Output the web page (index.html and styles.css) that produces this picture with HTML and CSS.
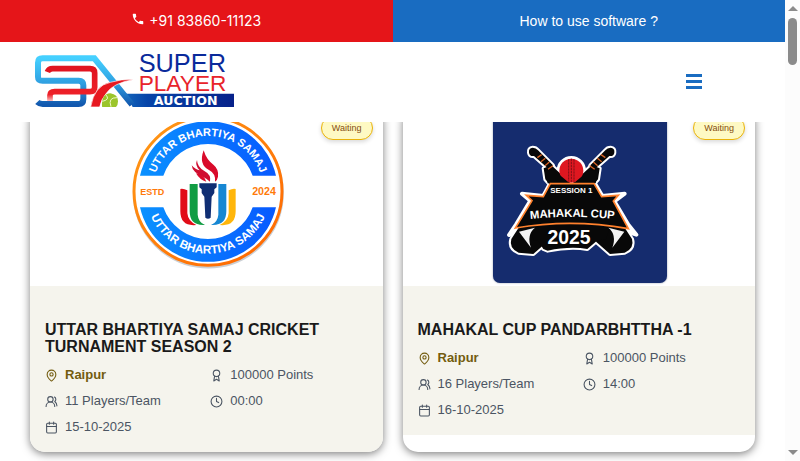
FILE: index.html
```html
<!DOCTYPE html>
<html lang="en">
<head>
<meta charset="utf-8">
<title>Super Player Auction</title>
<link rel="stylesheet" href="styles.css">
</head>
<body>
<svg class="sprite" aria-hidden="true">
  <symbol id="pin" viewBox="0 0 24 24"><path d="M20 10c0 5-5.500 10.200-7.400 11.800a1 1 0 0 1-1.200 0C9.500 20.200 4 15 4 10a8 8 0 0 1 16 0"/><circle cx="12" cy="10" r="3"/></symbol>
  <symbol id="award" viewBox="0 0 24 24"><circle cx="12" cy="8" r="6"/><path d="M8.500 13 7 22l5-3 5 3-1.500-9"/></symbol>
  <symbol id="users" viewBox="0 0 24 24"><path d="M18 21a8 8 0 0 0-16 0"/><circle cx="10" cy="8" r="5"/><path d="M22 20c0-3.370-2-6.500-4-8a5 5 0 0 0-.450-8.300"/></symbol>
  <symbol id="clock" viewBox="0 0 24 24"><circle cx="12" cy="12" r="10"/><path d="M12 6v6l4 2"/></symbol>
  <symbol id="calendar" viewBox="0 0 24 24"><path d="M8 2v4M16 2v4M3 10h18"/><rect x="3" y="4" width="18" height="18" rx="2"/></symbol>
</svg>
<div class="page">
  <div class="topbar">
    <a class="phone" href="tel:+918386011123"><svg viewBox="0 0 24 24" aria-hidden="true"><path d="M6.600 10.800c1.400 2.800 3.800 5.100 6.600 6.600l2.200-2.200c.3-.3.700-.4 1-.2 1.100.4 2.300.6 3.600.6.600 0 1 .4 1 1V20c0 .6-.4 1-1 1C10.600 21 3 13.400 3 4c0-.6.400-1 1-1h3.500c.6 0 1 .4 1 1 0 1.200.2 2.400.6 3.600.1.400 0 .7-.3 1z"/></svg>+91 83860-11123</a>
    <a class="howto" href="#">How to use software ?</a>
  </div>
  <header class="header">
    <a href="#" aria-label="Super Player Auction">
      <svg class="logo" viewBox="105 165 597 156">
        <defs>
          <linearGradient id="sky" x1="0" y1="0" x2="0" y2="1"><stop offset="0" stop-color="#45d0ff"/><stop offset=".55" stop-color="#2e9ee0"/><stop offset="1" stop-color="#1258ae"/></linearGradient>
          <linearGradient id="bar" x1="0" y1="0" x2="1" y2="0"><stop offset="0" stop-color="#1263bb"/><stop offset=".2" stop-color="#0644a8"/><stop offset="1" stop-color="#07218a"/></linearGradient>
          <linearGradient id="crimson" x1="0" y1="0" x2="0" y2="1"><stop offset="0" stop-color="#e01420"/><stop offset=".8" stop-color="#ee2028"/><stop offset="1" stop-color="#ffc0c0"/></linearGradient>
        </defs>
        <path d="M378 281H702V321H398Z" fill="url(#bar)"/>
        <path d="M396 314L283 175H128Q114 175 114 188V231Q114 242 128 242H236Q250 242 250 256V297Q250 312 236 312H128Q118 312 112 306" fill="none" stroke="url(#sky)" stroke-width="18"/>
        <path d="M142 216Q146 206 158 206H270Q284 206 284 219V262Q284 275 270 275H164Q150 275 150 286V303" fill="none" stroke="url(#crimson)" stroke-width="17"/>
        <path d="M272 321Q283 256 331 247Q365 236 400 239Q339 249 319 280Q304 297 299 321Z" fill="#e71820" stroke="#fff" stroke-width="2"/>
        <path d="M306 320Q304 281 331 280Q354 283 354 304Q354 315 348 321H308Z" fill="#9bc52b"/>
        <path d="M317 284Q332 299 307 304M351 293Q323 292 333 320" fill="none" stroke="#eff8c8" stroke-width="3"/>
        <text class="brand" x="416" y="217" font-size="76" fill="#0a2a9b">SUPER</text>
        <text class="brand" x="416" y="273" font-size="68" fill="#e8242b">PLAYER</text>
        <text class="brand-wide" x="557" y="315" font-size="38" fill="#fff" text-anchor="middle">AUCTION</text>
      </svg>
    </a>
    <button class="menu" type="button" aria-label="Menu"><span></span><span></span><span></span></button>
  </header>
  <main class="cards">
    <article class="card">
      <div class="cover">
        <svg viewBox="3 -3 522 522" role="img" aria-label="Uttar Bhartiya Samaj">
          <defs>
            <linearGradient id="ring" x1="0" y1="0" x2="1" y2="0"><stop offset="0" stop-color="#0a91ff"/><stop offset="1" stop-color="#0759ff"/></linearGradient>
            <linearGradient id="edge" x1="0" y1="0" x2="1" y2="1"><stop offset="0" stop-color="#ff9a17"/><stop offset="1" stop-color="#ff6500"/></linearGradient>
            <path id="arc-top" d="M98 244A166 166 0 0 1 430 244"/>
            <path id="arc-bottom" d="M77 244A187 187 0 0 0 451 244"/>
          </defs>
          <circle cx="265" cy="249" r="223" fill="none" stroke="#ccd0d5" stroke-width="7"/>
          <circle cx="264" cy="244" r="222" fill="#fff" stroke="url(#edge)" stroke-width="9"/>
          <path d="M60 197A209 209 0 0 1 468 197H398A142 142 0 0 0 130 197Z" fill="url(#ring)"/>
          <path d="M60 292A209 209 0 0 0 468 292H398A142 142 0 0 1 130 292Z" fill="url(#ring)"/>
          <g class="bold" fill="#fff" text-anchor="middle">
            <text font-size="33"><textPath href="#arc-top" startOffset="50%">UTTAR BHARTIYA SAMAJ</textPath></text>
            <text font-size="35"><textPath href="#arc-bottom" startOffset="50%">UTTAR BHARTIYA SAMAJ</textPath></text>
          </g>
          <g class="bold" fill="#ff7a09" text-anchor="middle"><text x="97" y="254" font-size="27">ESTD</text><text x="432" y="256" font-size="32">2024</text></g>
          <path d="M181 237Q190 235 202 241V310Q204 333 229 345Q181 350 181 304Z" fill="#e10c18"/>
          <path d="M209 222H233V314Q235 337 255 345Q209 348 209 304Z" fill="#119c43"/>
          <path d="M319 222H295V314Q293 337 273 345Q319 348 319 304Z" fill="#1687d3"/>
          <path d="M347 237Q338 235 326 241V310Q324 333 299 345Q347 350 347 304Z" fill="#ffb60b"/>
          <path d="M238 220H290V232L283 238V249L275 260L272 323Q264 329 256 323L253 260L245 249V238L238 232Z" fill="#102e73"/>
          <path d="M251 121Q259 149 281 165Q297 178 294 200Q292 211 285 215Q288 191 267 180Q235 164 251 121Z" fill="#d90b2b"/>
          <path d="M231 150Q232 171 252 182Q275 194 270 215Q261 207 250 201Q217 187 215 166Q227 180 239 181Q224 166 231 150Z" fill="#cf0d30"/>
          <path d="M228 190Q251 192 259 215Q240 211 228 190Z" fill="#d90b2b"/>
        </svg>
        <span class="badge">Waiting</span>
      </div>
      <div class="info">
        <h2>UTTAR BHARTIYA SAMAJ CRICKET TURNAMENT SEASON 2</h2>
        <ul>
          <li class="place"><svg><use href="#pin"/></svg>Raipur</li>
          <li><svg><use href="#award"/></svg>100000 Points</li>
          <li><svg><use href="#users"/></svg>11 Players/Team</li>
          <li><svg><use href="#clock"/></svg>00:00</li>
          <li><svg><use href="#calendar"/></svg>15-10-2025</li>
        </ul>
      </div>
    </article>
    <article class="card">
      <div class="cover">
        <svg class="navy" viewBox="39 -18 522 522" role="img" aria-label="Mahakal Cup 2025">
          <defs>
            <path id="cup-arc" d="M132 314Q277 297 422 314"/>
            <g id="bat">
              <path d="M147 113Q145 99 158 98Q168 98 174 106L219 151L207 163L162 123Q149 125 147 113Z"/>
              <path d="M191 160L214 151L300 230L435 340L456 372Q464 400 434 413L390 417L350 382L216 216L196 193Z"/>
            </g>
            <path id="banner" d="M211 204H344L367 243L434 236L403 259L445 329L469 359L400 338Q275 314 159 338L87 360L109 327L151 257L126 236L190 243Z"/>
            <path id="base" d="M150 310H400L378 372L350 378L322 402Q270 393 203 407L190 402L174 377L160 376Z"/>
          </defs>
          <g fill="#fff" stroke="#fff" stroke-width="12" stroke-linejoin="round">
            <use href="#bat"/><use href="#bat" transform="matrix(-1 0 0 1 550 0)"/><use href="#banner"/><use href="#base"/><circle cx="274" cy="167" r="38"/>
          </g>
          <g fill="#080808"><use href="#bat"/><use href="#bat" transform="matrix(-1 0 0 1 550 0)"/><use href="#base"/></g>
          <circle cx="274" cy="167" r="36" fill="#df1720"/>
          <path d="M266 133V200M274 131V202M282 133V200" fill="none" stroke="#7d1016" stroke-width="3" stroke-dasharray="7 2"/>
          <path d="M194 167L222 166L269 205H203Z M356 167L328 166L281 205H347Z" fill="#080808"/>
          <path d="M172 128L185 119M183 140L196 130M195 152L208 141M204 163L219 152M376 128L363 119M365 140L352 130M353 152L340 141M344 163L329 152" stroke="#d76325" stroke-width="4"/>
          <path d="M117 350L165 338Q139 359 153 398L135 374ZM433 350L385 338Q411 359 397 398L415 374Z" fill="#f4f4f4"/>
          <path d="M211 206H342L365 245L415 241L400 258L445 341Q275 310 106 339L156 257L139 241L190 245Z" fill="#080808" stroke="#ff812d" stroke-width="5"/>
          <g class="bold" fill="#fff" text-anchor="middle">
            <text x="274" y="234" font-size="24">SESSION 1</text>
            <text font-size="34"><textPath href="#cup-arc" startOffset="50%">MAHAKAL CUP</textPath></text>
            <text x="267" y="388" font-size="58">2025</text>
          </g>
        </svg>
        <span class="badge">Waiting</span>
      </div>
      <div class="info">
        <h2>MAHAKAL CUP PANDARBHTTHA -1</h2>
        <ul>
          <li class="place"><svg><use href="#pin"/></svg>Raipur</li>
          <li><svg><use href="#award"/></svg>100000 Points</li>
          <li><svg><use href="#users"/></svg>16 Players/Team</li>
          <li><svg><use href="#clock"/></svg>14:00</li>
          <li><svg><use href="#calendar"/></svg>16-10-2025</li>
        </ul>
      </div>
    </article>
  </main>
</div>
<div class="scrollbar" aria-hidden="true">
  <i class="arrow up"></i>
  <i class="thumb"></i>
  <i class="arrow down"></i>
</div>
</body>
</html>
```
FILE: styles.css
```css
* { box-sizing: border-box; }
body {
  margin: 0;
  height: 100vh;
  display: flex;
  overflow: hidden;
  background: #fff;
  font-family: "Liberation Sans", Arial, sans-serif;
}
.sprite { display: none; }
.page { flex: 1; min-width: 0; overflow: hidden; }
a { color: inherit; text-decoration: none; }

.topbar { display: grid; grid-template-columns: 1fr 1fr; color: #fff; font-size: 14px; line-height: 42px; }
.topbar a { display: flex; justify-content: center; }
.phone { background: #e51519; font-family: Inter, sans-serif; gap: 4px; }
.phone svg { width: 14px; height: 14px; margin-top: 12px; fill: currentColor; }
.howto { background: #196cc1; }

.header {
  position: relative;
  z-index: 1;
  display: flex;
  align-items: center;
  justify-content: space-between;
  height: 80px;
  padding: 0 83px 2px 35px;
  background: #fff;
}
.logo { display: block; width: 199px; height: 52px; overflow: visible; }
.brand { font-family: "Liberation Sans", sans-serif; }
.brand-wide { font-family: "DejaVu Sans", sans-serif; font-weight: 700; }
.bold { font-family: "Liberation Sans", sans-serif; font-weight: 700; }
.menu { display: grid; gap: 3px; width: 16px; padding: 0; border: 0; background: none; }
.menu span { height: 3px; background: #196cc1; }

.cards {
  display: grid;
  grid-template-columns: 1fr 1fr;
  gap: 20px;
  margin-top: -16px;
  padding: 0 30px;
}
.card {
  overflow: hidden;
  border-radius: 15px;
  background: #fff;
  box-shadow: 0 2px 8px rgba(0, 0, 0, .5);
}
.cover { position: relative; display: flex; justify-content: center; padding: 3px 3px 3px 6px; }
.cover svg { width: 174px; height: 174px; }
.navy { background: #152c6e; border-radius: 7px; box-shadow: 0 0 2px #8b93a8; }
.badge {
  position: absolute;
  top: 10px;
  right: 10px;
  padding: 0 10px;
  border: 1px solid #eab308;
  border-radius: 12px;
  background: #fef9c3;
  box-shadow: 0 2px 4px rgba(0, 0, 0, .15);
  color: #854d0e;
  font-size: 9px;
  line-height: 22px;
}
.info { padding: 35px 15px 15px; background: #f5f4ed; }
h2 { margin: 0 0 10px; color: #1a1a1a; font-size: 16px; line-height: 17px; }
ul {
  display: grid;
  grid-template-columns: 1fr 1fr;
  gap: 6px 8px;
  margin: 0;
  padding: 0;
  list-style: none;
  color: #4b5563;
  font-size: 13px;
  line-height: 20px;
}
li { display: flex; align-items: center; gap: 7px; }
li svg { width: 13px; height: 13px; fill: none; stroke: currentColor; stroke-width: 2; stroke-linecap: round; stroke-linejoin: round; }
.place { color: #735c0f; font-weight: 700; }

.scrollbar { display: flex; flex-direction: column; align-items: center; width: 15px; padding: 6px 0; background: #fcfcfc; }
.arrow { border: 5px solid transparent; }
.up { border-top: 0; border-bottom-color: #8b8b8b; }
.down { margin-top: auto; border-bottom: 0; border-top-color: #8b8b8b; }
.thumb { width: 9px; height: 47px; margin-top: 7px; border-radius: 5px; background: #8b8b8b; }
```
